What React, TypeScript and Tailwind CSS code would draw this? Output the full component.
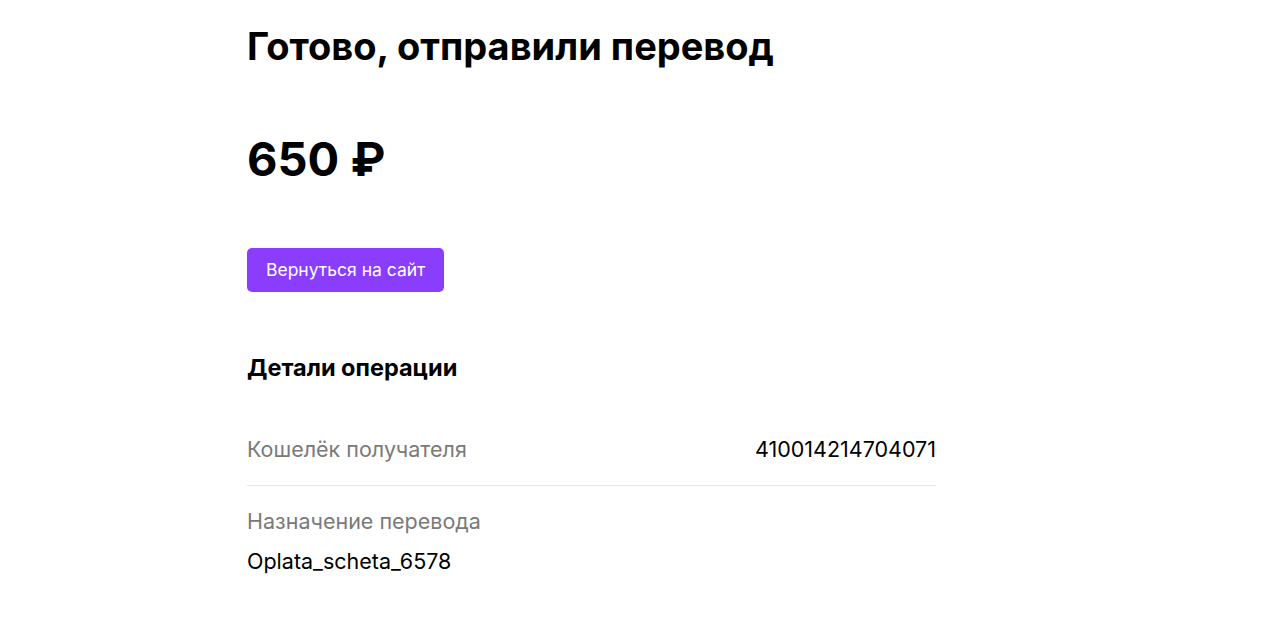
export default function App() {
  return (
    <div className="min-h-screen bg-white text-black" style={{ fontFamily: 'Inter, "Noto Sans", sans-serif' }}>
      <div className="ml-[247px] w-[689px] pt-[21px]">
        <h1 className="text-[38px] leading-[50px] font-bold">Готово, отправили перевод</h1>
        <div className="mt-[58px] text-[47px] leading-[60px] font-bold">650 ₽</div>
        <button className="mt-[59px] h-[44px] px-[19px] rounded-[5px] bg-[#8b3dfd] text-white text-[17.5px]">
          Вернуться на сайт
        </button>
        <h2 className="mt-[61px] text-[23.5px] leading-[30px] font-bold">Детали операции</h2>
        <div className="mt-[47px] flex justify-between items-center h-[38px] text-[21.5px]">
          <span className="text-[#7a7a7a]">Кошелёк получателя</span>
          <span>410014214704071</span>
        </div>
        <div className="mt-[17px] border-t border-[#e6e6e6]" />
        <div className="mt-[20px] text-[21.5px] leading-[30px] text-[#7a7a7a]">Назначение перевода</div>
        <div className="mt-[10px] text-[21.5px] leading-[30px]">Oplata_scheta_6578</div>
      </div>
    </div>
  )
}
